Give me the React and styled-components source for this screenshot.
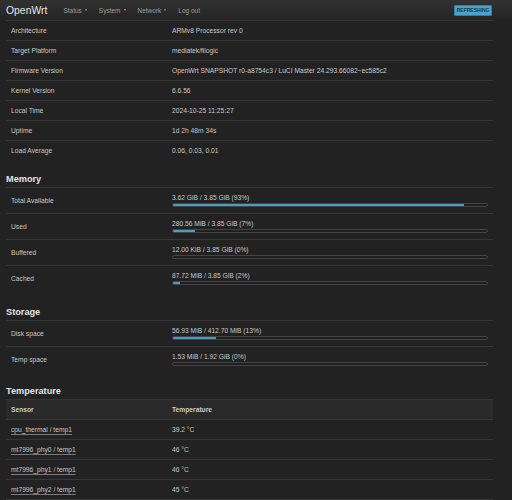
import React from "react";
import styled, { createGlobalStyle } from "styled-components";

const Global = createGlobalStyle`
  html, body { margin: 0; padding: 0; background: #222; }
  body {
    font-family: "Liberation Sans", Arial, sans-serif;
    color: #c8c8c8;
    font-size: 6.7px;
  }
`;

const Page = styled.div`
  width: 512px;
  min-height: 500px;
  background: #222;
  overflow: hidden;
`;

const Header = styled.div`
  height: 20px;
  display: flex;
  align-items: center;
  padding: 0 20px 0 6px;
  background: linear-gradient(#323232, #242424);
  box-sizing: border-box;
`;

const Brand = styled.div`
  font-size: 10.4px;
  color: #e6e6e6;
  margin-right: 16px;
`;

const Nav = styled.div`
  display: flex;
  align-items: center;
  gap: 12px;
  flex: 1;
`;

const NavItem = styled.span`
  color: #9d9d9d;
  font-size: 6.5px;
  display: inline-flex;
  align-items: center;
  gap: 3px;
`;

const Caret = styled.span`
  display: inline-block;
  width: 0;
  height: 0;
  border-left: 1.5px solid transparent;
  border-right: 1.5px solid transparent;
  border-top: 2px solid #9d9d9d;
`;

const Badge = styled.span`
  display: inline-block;
  background: #4aa3cf;
  border: 1px solid #2e7fa8;
  color: #1c3848;
  font-weight: bold;
  font-size: 5px;
  line-height: 9px;
  padding: 0 1.5px;
  border-radius: 1px;
`;

const Content = styled.div`
  padding: 0 19px 0 6px;
`;

const Section = styled.div`
  margin-top: ${(p) => p.$gap}px;
`;

const Heading = styled.div`
  font-size: 9.2px;
  font-weight: bold;
  color: #e2e2e2;
  line-height: 16px;
  border-bottom: 1px solid #363636;
`;

const Row = styled.div`
  display: grid;
  grid-template-columns: 161px 1fr;
  align-items: center;
  height: ${(p) => p.$h}px;
  border-top: ${(p) => (p.$top ? "1px solid #363636" : "none")};
  border-bottom: ${(p) => (p.$last ? "none" : "1px solid #363636")};
  background: ${(p) => (p.$head ? "#2a2a2a" : "transparent")};
  font-weight: ${(p) => (p.$head ? "bold" : "normal")};
`;

const Cell = styled.div`
  padding: 0 5px;
  white-space: nowrap;
  color: #c8c8c8;
`;

const Link = styled.span`
  text-decoration: underline;
  text-decoration-color: #7a7a7a;
  text-underline-offset: 2px;
  text-decoration-thickness: 1px;
`;

const BarLabel = styled.div`
  line-height: 8px;
`;

const BarTrack = styled.div`
  margin-top: 1px;
  height: 2px;
  border: 1px solid #444;
  border-radius: 2px;
  background: #1f1f1f;
  overflow: hidden;
`;

const BarFill = styled.div`
  height: 100%;
  background: #4b9cc3;
`;

const sys = [
  ["Architecture", "ARMv8 Processor rev 0"],
  ["Target Platform", "mediatek/filogic"],
  ["Firmware Version", "OpenWrt SNAPSHOT r0-a8754c3 / LuCI Master 24.293.66082~ec585c2"],
  ["Kernel Version", "6.6.56"],
  ["Local Time", "2024-10-25 11:25:27"],
  ["Uptime", "1d 2h 48m 34s"],
  ["Load Average", "0.06, 0.03, 0.01"],
];

const mem = [
  ["Total Available", "3.62 GiB / 3.85 GiB (93%)", 92.8],
  ["Used", "280.56 MiB / 3.85 GiB (7%)", 7.1],
  ["Buffered", "12.00 KiB / 3.85 GiB (0%)", 0],
  ["Cached", "87.72 MiB / 3.85 GiB (2%)", 2.2],
];

const storage = [
  ["Disk space", "56.93 MiB / 412.70 MiB (13%)", 13.8],
  ["Temp space", "1.53 MiB / 1.92 GiB (0%)", 0],
];

const temps = [
  ["cpu_thermal / temp1", "39.2 °C"],
  ["mt7996_phy0 / temp1", "46 °C"],
  ["mt7996_phy1 / temp1", "46 °C"],
  ["mt7996_phy2 / temp1", "45 °C"],
];

function Bar({ label, pct }) {
  return (
    <div>
      <BarLabel>{label}</BarLabel>
      <BarTrack>
        <BarFill style={{ width: `${pct}%` }} />
      </BarTrack>
    </div>
  );
}

export default function App() {
  return (
    <Page>
      <Global />
      <Header>
        <Brand>OpenWrt</Brand>
        <Nav>
          <NavItem>Status<Caret /></NavItem>
          <NavItem>System<Caret /></NavItem>
          <NavItem>Network<Caret /></NavItem>
          <NavItem>Log out</NavItem>
        </Nav>
        <Badge>REFRESHING</Badge>
      </Header>
      <Content>
        <Section $gap={0}>
          {sys.map(([k, v], i) => (
            <Row key={k} $h={19} $top={i === 0} $last={i === sys.length - 1}>
              <Cell>{k}</Cell>
              <Cell>{v}</Cell>
            </Row>
          ))}
        </Section>
        <Section $gap={11}>
          <Heading>Memory</Heading>
          {mem.map(([k, v, p], i) => (
            <Row key={k} $h={25} $last={i === mem.length - 1}>
              <Cell>{k}</Cell>
              <Cell><Bar label={v} pct={p} /></Cell>
            </Row>
          ))}
        </Section>
        <Section $gap={13}>
          <Heading>Storage</Heading>
          {storage.map(([k, v, p], i) => (
            <Row key={k} $h={25} $last={i === storage.length - 1}>
              <Cell>{k}</Cell>
              <Cell><Bar label={v} pct={p} /></Cell>
            </Row>
          ))}
        </Section>
        <Section $gap={11}>
          <Heading>Temperature</Heading>
          <Row $h={19} $head>
            <Cell>Sensor</Cell>
            <Cell>Temperature</Cell>
          </Row>
          {temps.map(([k, v]) => (
            <Row key={k} $h={19}>
              <Cell><Link>{k}</Link></Cell>
              <Cell>{v}</Cell>
            </Row>
          ))}
        </Section>
      </Content>
    </Page>
  );
}
